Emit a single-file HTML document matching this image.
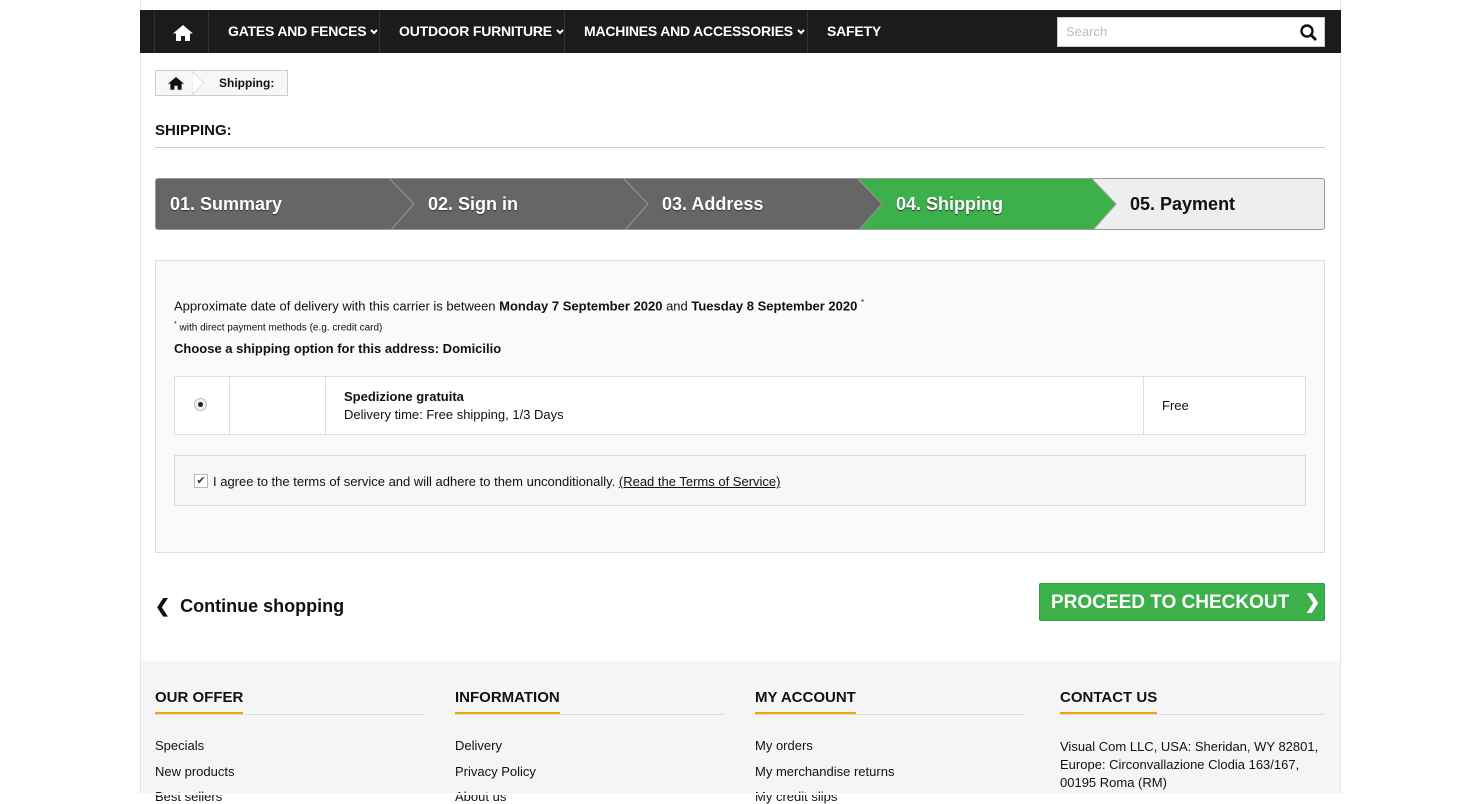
<!DOCTYPE html>
<html><head><style>
*{margin:0;padding:0;box-sizing:border-box}
body{width:1473px;height:795px;overflow:hidden;background:#fff;font-family:"Liberation Sans",sans-serif;color:#111;position:relative}
.wrap{position:absolute;left:140px;top:0;width:1201px;height:795px;border-left:1px solid #e5e5e5;border-right:1px solid #e5e5e5;background:#fff}
.nav{position:absolute;left:140px;top:10px;width:1201px;height:43px;background:#1b1b1b}
.nav .it{position:absolute;top:0;height:43px;line-height:43px;color:#fff;font-weight:bold;font-size:14px;border-left:1px solid #333;padding-left:19px;letter-spacing:-0.2px}
.cv{display:inline-block;margin-left:4px;vertical-align:middle}
.search{position:absolute;left:1057px;top:17px;width:268px;height:30px;background:#fff;border:1px solid #ccc;font-size:13px;color:#bbb;padding:6px 8px}
.abs{position:absolute}
.bc{left:155px;top:70px;width:133px;height:26px;border:1px solid #ccc;background:#f7f7f7}
.steps{left:155px;top:178px;width:1170px;height:52px;border:1px solid #999;border-radius:3px;overflow:hidden;background:#666}
.st{position:absolute;top:0;height:50px;line-height:50px;font-weight:bold;font-size:18px;color:#fff;text-shadow:0 1px 1px #333}
.box{left:155px;top:260px;width:1170px;height:293px;border:1px solid #ddd;background:#fafafa}
.f{font-size:13px}
.fh{position:absolute;top:689px;font-weight:bold;font-size:15px}
.fh span{display:inline-block;border-bottom:2px solid #f0a400;padding-bottom:6px}
.fl{position:absolute;top:714px;height:1px;background:#ddd;width:270px}
.fi{position:absolute;font-size:13px}
</style></head><body>
<div class="wrap"></div>
<div class="abs" style="left:141px;top:661px;width:1199px;height:134px;background:#f5f5f5"></div>
<div class="nav">
<div class="it" style="left:14px;width:55px;padding-left:18px"><svg width="20" height="17" viewBox="0 0 20 17" style="vertical-align:middle"><path d="M10 1L0 9.5h3V17h5v-5h4v5h5V9.5h3z" fill="#fff"/></svg></div>
<div class="it" style="left:68px">GATES AND FENCES<svg class="cv" width="8" height="6" viewBox="0 0 8 6"><path d="M1 1l3 3 3-3" stroke="#fff" stroke-width="2" fill="none"/></svg></div>
<div class="it" style="left:239px">OUTDOOR FURNITURE<svg class="cv" width="8" height="6" viewBox="0 0 8 6"><path d="M1 1l3 3 3-3" stroke="#fff" stroke-width="2" fill="none"/></svg></div>
<div class="it" style="left:424px">MACHINES AND ACCESSORIES<svg class="cv" width="8" height="6" viewBox="0 0 8 6"><path d="M1 1l3 3 3-3" stroke="#fff" stroke-width="2" fill="none"/></svg></div>
<div class="it" style="left:667px;width:534px">SAFETY</div>
</div>
<div class="search">Search<svg width="18" height="18" viewBox="0 0 18 18" style="position:absolute;right:6px;top:6px"><circle cx="7" cy="7" r="5.5" stroke="#111" stroke-width="2.4" fill="none"/><path d="M11 11l5 5" stroke="#111" stroke-width="2.8"/></svg></div>
<div class="abs bc"><svg width="16" height="14" viewBox="0 0 20 17" style="position:absolute;left:12px;top:5px"><path d="M10 1L0 9.5h3V17h5v-5h4v5h5V9.5h3z" fill="#111"/></svg>
<svg class="abs" style="left:36px;top:0" width="14" height="24"><polygon points="0,0 12,12 0,24" fill="#fff" stroke="#ddd"/></svg>
<div class="abs" style="left:63px;top:5px;font-size:12px;font-weight:bold">Shipping:</div></div>
<div class="abs" style="left:155px;top:122px;font-weight:bold;font-size:15px">SHIPPING:</div>
<div class="abs" style="left:155px;top:147px;width:1170px;height:1px;background:#ccc"></div>
<div class="abs steps">
<svg class="abs" style="left:0;top:0" width="1170" height="52"><polygon points="702,0 936,0 960,25 936,52 702,52 726,25" fill="#3cb04b"/><polygon points="936,0 1170,0 1170,52 936,52 960,25" fill="#eee"/>
<g fill="none" stroke="#999" stroke-width="1"><polyline points="234,0 258,25 234,52"/><polyline points="468,0 492,25 468,52"/><polyline points="702,0 726,25 702,52"/><polyline points="936,0 960,25 936,52"/></g></svg>
<div class="st" style="left:14px">01. Summary</div>
<div class="st" style="left:272px">02. Sign in</div>
<div class="st" style="left:506px">03. Address</div>
<div class="st" style="left:740px">04. Shipping</div>
<div class="st" style="left:974px;color:#111;text-shadow:none">05. Payment</div>
</div>
<div class="abs box"></div>
<div class="abs f" style="left:174px;top:298px">Approximate date of delivery with this carrier is between <b>Monday 7 September 2020</b> and <b>Tuesday 8 September 2020</b> <sup style="font-size:8px">*</sup></div>
<div class="abs" style="left:174px;top:321px;font-size:10px"><sup style="font-size:7px">*</sup> with direct payment methods (e.g. credit card)</div>
<div class="abs f" style="left:174px;top:341px;font-weight:bold">Choose a shipping option for this address: Domicilio</div>
<div class="abs" style="left:174px;top:376px;width:1132px;height:59px;border:1px solid #ddd;background:#fff">
<div class="abs" style="left:54px;top:0;width:1px;height:57px;background:#ddd"></div>
<div class="abs" style="left:150px;top:0;width:1px;height:57px;background:#ddd"></div>
<div class="abs" style="left:968px;top:0;width:1px;height:57px;background:#ddd"></div>
<div class="abs" style="left:19px;top:21px;width:13px;height:13px;border-radius:50%;border:1px solid #bbb;background:#f3f3f3"><div class="abs" style="left:3px;top:3px;width:5px;height:5px;border-radius:50%;background:#222"></div></div>
<div class="abs f" style="left:169px;top:12px;font-weight:bold">Spedizione gratuita</div>
<div class="abs f" style="left:169px;top:30px">Delivery time: Free shipping, 1/3 Days</div>
<div class="abs f" style="left:987px;top:21px">Free</div>
</div>
<div class="abs" style="left:174px;top:455px;width:1132px;height:51px;border:1px solid #ddd;background:#f7f7f7">
<div class="abs" style="left:19px;top:18px;width:14px;height:14px;border:1px solid #bbb;background:#fff;font-size:11px;line-height:12px;text-align:center;color:#333">✔</div>
<div class="abs f" style="left:38px;top:18px">I agree to the terms of service and will adhere to them unconditionally. <u>(Read the Terms of Service)</u></div>
</div>
<div class="abs" style="left:155px;top:596px;font-size:18px;font-weight:bold"><span style="font-size:18px">❮</span>&nbsp; Continue shopping</div>
<div class="abs" style="left:1039px;top:583px;width:286px;height:38px;background:#3cb04b;border:1px solid #2e9a3c;border-radius:2px;color:#fff;font-weight:bold;font-size:19px;line-height:37px;padding-left:11px">PROCEED TO CHECKOUT <span style="margin-left:10px">❯</span></div>
<div class="fh" style="left:155px"><span>OUR OFFER</span></div>
<div class="fh" style="left:455px"><span>INFORMATION</span></div>
<div class="fh" style="left:755px"><span>MY ACCOUNT</span></div>
<div class="fh" style="left:1060px"><span>CONTACT US</span></div>
<div class="fl" style="left:155px"></div><div class="fl" style="left:455px"></div><div class="fl" style="left:755px"></div><div class="fl" style="left:1060px;width:265px"></div>
<div class="fi" style="left:155px;top:738px">Specials</div><div class="fi" style="left:155px;top:764px">New products</div><div class="fi" style="left:155px;top:789px">Best sellers</div>
<div class="fi" style="left:455px;top:738px">Delivery</div><div class="fi" style="left:455px;top:764px">Privacy Policy</div><div class="fi" style="left:455px;top:789px">About us</div>
<div class="fi" style="left:755px;top:738px">My orders</div><div class="fi" style="left:755px;top:764px">My merchandise returns</div><div class="fi" style="left:755px;top:789px">My credit slips</div>
<div class="fi" style="left:1060px;top:738px;line-height:18px">Visual Com LLC, USA: Sheridan, WY 82801,<br>Europe: Circonvallazione Clodia 163/167,<br>00195 Roma (RM)</div>
<div class="abs" style="left:0;top:793px;width:1473px;height:2px;background:#fff"></div>
</body></html>
